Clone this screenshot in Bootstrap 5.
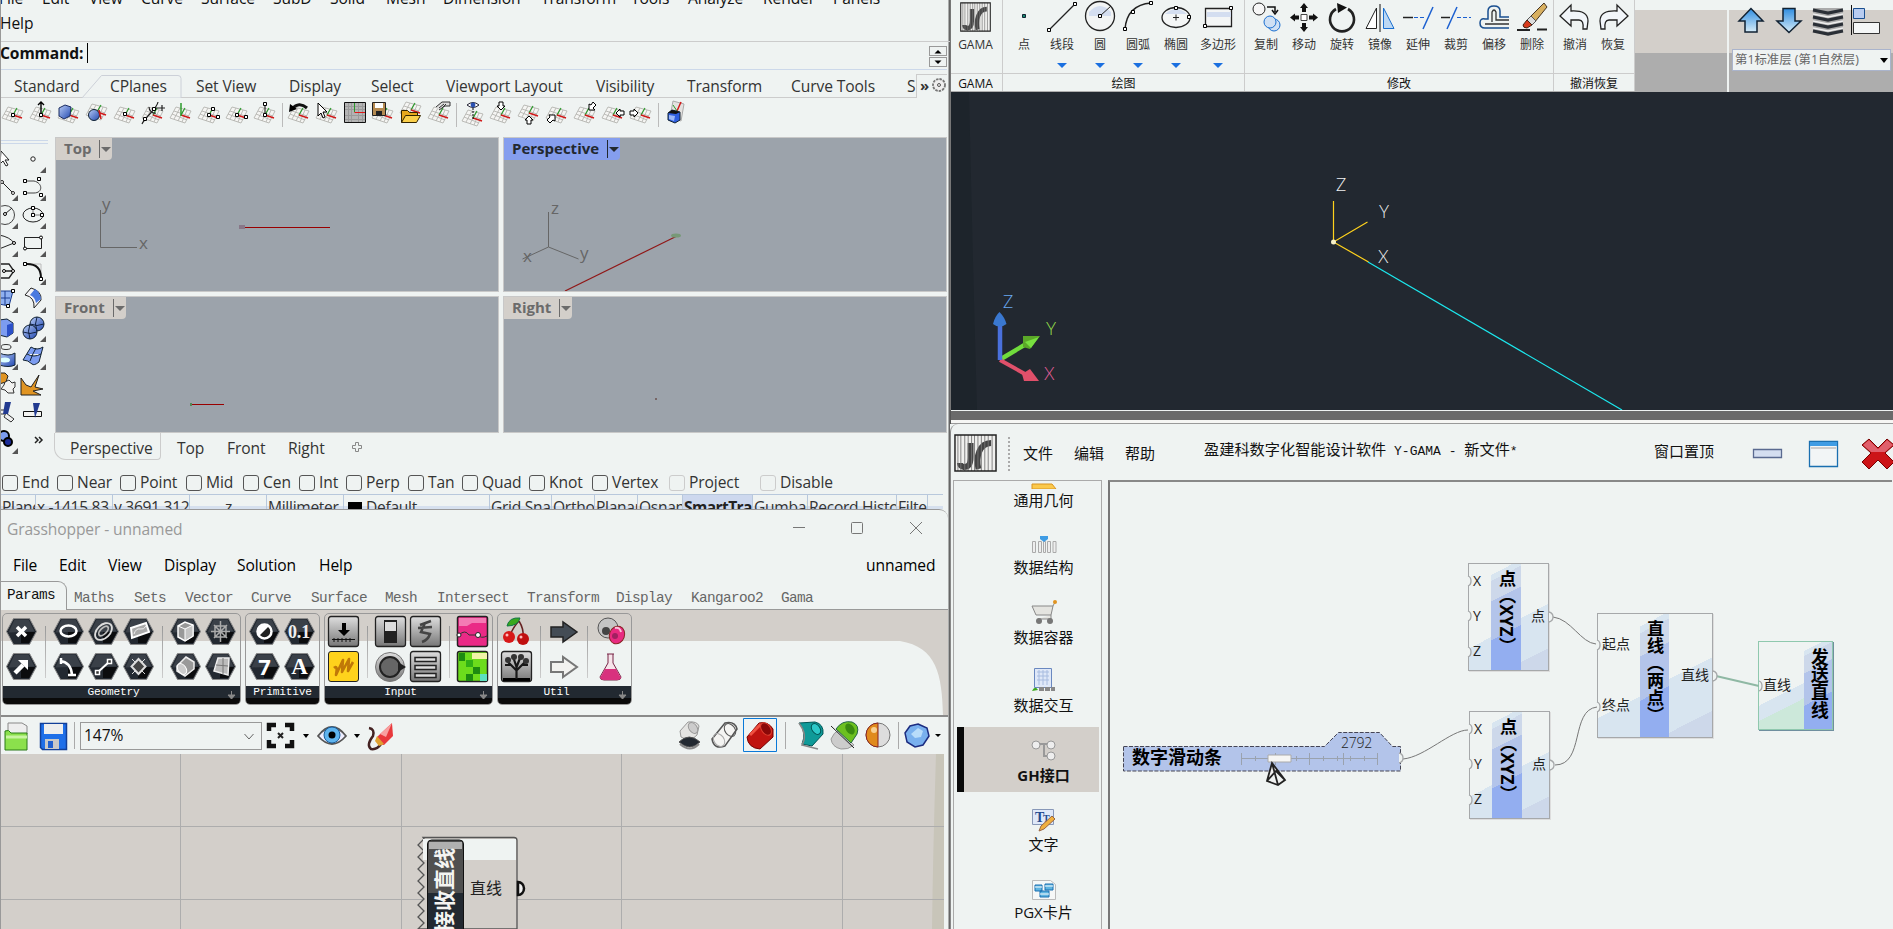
<!DOCTYPE html>
<html lang="zh-CN">
<head>
<meta charset="utf-8">
<title>Rhino / Grasshopper / Y-GAMA</title>
<link href="https://cdn.jsdelivr.net/npm/bootstrap@5.3.0/dist/css/bootstrap.min.css" rel="stylesheet">
<style>
:root{--pane:#eff3f2;--sand:#d3cfca;--ink:#222830;--line:#adadad}
html,body{height:929px;overflow:hidden}
body{background:var(--pane);font-family:"Open Sans","Noto Sans CJK SC",sans-serif;font-size:15.6px;color:#111;line-height:24px;letter-spacing:-.1px}
svg{display:block;flex:none}
.desk{width:1893px;height:929px}
.colL{width:950px;flex:none;background:linear-gradient(90deg,var(--pane) 947px,#666 948px);border-left:1px solid #999}
.trk{display:grid;white-space:nowrap}
.rhino{height:509px;flex:none}
.rmenu{height:42px;border-bottom:1px solid #ccc;display:flow-root}
.rmenu .m1{margin-top:-14px;height:25px;margin-left:-2px;grid-template-columns:43px 47px 52px 60px 72px 57px 56px 57px 98px 90px 57px 75px 70px 60px}
.rmenu .m2{margin-left:-1px}
.cmd{height:28px;border-bottom:1px solid #ccd8ea;width:946px;padding-right:0}
.cmd b{line-height:22px;margin-left:-1px;width:87px}
.caretbar{width:1px;height:20px;background:#000;margin-top:1px}
.spin{width:18px;height:10px;border:1px solid #999;margin-bottom:1px}
.rtabs{height:28px;color:#333;line-height:32px;width:946px;background:linear-gradient(#ccc,#ccc) 0 100%/100% 1px no-repeat;position:relative}
.rtabs .trk{grid-template-columns:96px 86px 93px 82px 75px 150px 91px 104px 116px 10px;margin-left:13px;position:relative}
.rtabs svg{position:absolute;left:81px;top:4px}
.rtabs .more{position:absolute;right:0;top:4px;width:31px;height:24px;background:var(--pane);border-left:1px solid #ccc;border-top:1px solid #ccc;line-height:20px;padding-left:3px;font-weight:700;font-size:15px}
.tbar{height:39px;margin-left:-2px;padding-top:1px}
.vsep{width:6px;height:24px;margin-top:4px;background:linear-gradient(#bbb,#bbb) 50% 0/1px 100% no-repeat}
.rmain{height:296px}
.tools{width:53px;flex:none;overflow-x:clip;overflow-y:visible;background:linear-gradient(#ccd8ea,#ccd8ea) 0 3px/47px 1px no-repeat,linear-gradient(#ccd8ea,#ccd8ea) 0 6px/47px 1px no-repeat}
.tools .tg{display:grid;grid-template-columns:28px 28px;grid-auto-rows:28.1px;padding-top:8px;margin-left:-10px}
.vps{display:grid;grid-template:155px 137px/444px 444px;gap:4px 4px;padding-left:1px}
.vp{background:#9ca3ab;border:1px solid #c8c8c8;position:relative;overflow:hidden}
.vp>svg{position:absolute;left:0;top:0}
.vlab{position:relative;z-index:1;display:inline-flex;background:var(--sand);color:#6b6b6b;font-weight:700;font-size:15px;line-height:20px;height:22px;padding-left:8px;border-radius:0 0 4px 0;vertical-align:top;letter-spacing:0}
.vlab i{width:13px;margin-left:8px;border-left:1px solid currentColor;margin-top:2px;height:18px;display:flex;align-items:center;padding-left:1px}
.vlab i:after{content:"";border:5px solid transparent;border-top-color:currentColor;border-bottom:0}
.vlab.on{background:#859eee;color:var(--ink)}
.vtabs{height:38px;color:#333;line-height:31px;padding-left:53px}
.vtabs .cur{width:107px;height:27px;border:1px solid #ccc;border-top:0;border-radius:0 0 4px 12px;padding-left:15px}
.vtabs .trk{grid-template-columns:50px 61px 63px 30px;margin-left:16px}
.snap{height:23px;line-height:22px;color:#333;grid-template-columns:55px 63px 66px 57px 56px 47px 62px 54px 67px 63px 77px 91px 70px;margin-left:1px}
.snap label:before{content:"";display:inline-block;width:16px;height:16px;border:1px solid #555;border-radius:3px;margin-right:4px;vertical-align:-3px}
.snap .dim:before{border-color:#ccc}
.stat{height:15px;border-top:1px solid #b8c8dc;overflow:hidden;line-height:25px;color:#333;width:942px;grid-template-columns:35px 77px 77px 77px 77px 146px 62px 43px 43px 45px 70px 55px 89px 31px;box-shadow:inset 0 -3px #d6e0ee}
.stat span{border-right:1px solid #b8c8dc;overflow:hidden;height:15px;padding-left:1px;letter-spacing:-.3px}
.stat .on{background:#cdd8ee;font-weight:700;color:#222;letter-spacing:-.6px}
.sw{display:inline-block;width:14px;height:14px;background:#000;vertical-align:-3px;margin:0 4px 0 3px}
/* grasshopper */
.gh{height:420px;flex:none;border-top:1px solid #999;border-radius:0 9px 0 0;width:947px;background:var(--pane);overflow:hidden}
.ght{height:42px;color:#999;line-height:38px;padding-left:6px}
.ghm{height:28px;line-height:27px;margin-left:12px;grid-template-columns:46px 49px 56px 73px 82px 547px 70px;color:#000}
.mono{font-family:"Liberation Mono","Noto Sans CJK SC",monospace}
.ghtab{height:30px;line-height:36px;font-size:14.4px;letter-spacing:-.64px;color:#666;grid-template-columns:67px 60px 51px 66px 60px 74px 52px 90px 89px 75px 90px 60px;padding-left:6px;background:linear-gradient(#999,#999) 66px 100%/900px 1px no-repeat}
.ghtab .cur{color:#111;border:1px solid #999;border-bottom:0;border-left:0;border-radius:0 9px 0 0;margin:1px 0 0 -6px;padding-left:6px;line-height:27px;width:66px}
.rib{height:107px;padding:3px 0 0 1px;background:linear-gradient(var(--sand) 31px,var(--pane) 31px);border-bottom:2px solid #8a8a8a;position:relative}
.rib .cornr{position:absolute;right:0;top:0}
.grp{height:92px;border:1px solid #999;border-radius:5px;overflow:hidden;position:relative;margin-right:4px;flex:none}
.grp .icx{height:72px;padding-left:1px}
.grp .c2{width:35px}
.grp .sp{width:12px;background:linear-gradient(#999,#ccc) 50% 12px/1px 52px no-repeat}
.grp .cap{background:linear-gradient(#222931 12px,#0a0a0a 12px);color:#fff;text-align:center;height:18px;font-size:11.2px;line-height:13px;letter-spacing:-.2px}
.g1{width:239px}.g2{width:75px}.g3{width:169px}.g4{width:135px}
.gbar{height:37px}
.zoomb{width:182px;height:28px;border:1px solid #999;margin:5px 0 0 4px;line-height:25px;padding:0 7px 0 3px;font-size:15.6px}
/* CAD */
.colR{width:943px}
.cad{height:410px;background:#1c232a;border-left:1px solid #777}
.ribb{height:92px;background:linear-gradient(var(--pane) 10px,var(--sand) 10px 53px,var(--line) 53px)}
.pnl{background:var(--pane);border-right:1px solid #ccc;height:91px;text-align:center;font-size:12px;color:#333;letter-spacing:0;flex:none}
.pnl .its{height:73px;padding-left:2px;line-height:20px}
.pnl .it{width:38px}
.pnl .it.wide{width:46px}
.pnl .it svg{margin:auto}
.pnl .dn:after{content:"";display:block;width:10px;margin:8px auto 0;border:5px solid transparent;border-top-color:#1a6fe0;border-bottom:0}
.pnl .cp{border-top:1px solid #ccc;line-height:19px;color:#111}
.p0{width:52px}.p0 .its,.p0 .cp{padding-right:2px!important}.p1{width:242px}.p2{width:309px}.p3{width:81px}
.fl{padding:0 0 0 92px}
.fls{border-left:2px solid var(--pane);width:166px;padding:5px 0 0 3px}
.flsel{width:159px;height:22px;border:1px solid #aab4cc;background:var(--pane);font-size:12.4px;line-height:20px;color:#666;padding:0 2px;margin-top:12px;letter-spacing:0;white-space:nowrap}
.cv{height:318px}
.strip{height:14px;background:linear-gradient(var(--pane) 1px,#6a6a6a 1px 10px,#f6f6f4 10px 13px,#999 13px);border-left:1px solid #555}
.gama{height:505px;border-left:1px solid #888;background:var(--pane);letter-spacing:0;border-radius:8px 0 0 0}
.gtop{height:56px;font-size:15px;color:#111;line-height:58px;white-space:nowrap}
.gtop .mn{grid-template-columns:51px 51px 79px;margin-left:9px}
.gtop .ti{font-size:15.2px;line-height:51px;width:450px}
.gtop .ti .mono{font-size:13px;white-space:pre;letter-spacing:0}
.gtop .pin{line-height:55px}
.glogo{margin:8px 0 0 3px}
.gbody{height:449px}
.side{width:149px;margin-left:2px;border:1px solid #aaa;border-bottom:0;flex:none;overflow:hidden;font-size:15px;position:relative}
.side .it{height:68.7px;text-align:center;padding-left:33px}
.side .it svg{margin:0 auto}
.side .it svg+div{line-height:24px;margin-top:0;margin-left:-1px}
.side .i1{height:52.5px}.side .i1 svg+div{margin-top:-1px}
.side .i3{margin-top:-2px;height:68px}.side .i4{height:58.5px}
.side .i6{padding-top:13px;height:80px}
.side .sel{background:linear-gradient(90deg,#0a0a0a 7px,var(--sand) 7px);margin:0 2px 0 3px;height:65px;margin-bottom:3.7px;padding-left:32px;font-weight:700}
.side .sel svg+div{margin-top:-1px}
.pane{width:784px;margin-left:6px;border-left:2px solid #777;border-top:2px solid #888;position:relative;overflow:hidden}
.wires{position:absolute;left:-2px;top:-2px;z-index:2}
.nd{position:absolute;border:1.5px solid #a6a8aa;display:grid;font-size:14px;line-height:18px;color:#222;box-shadow:1px 1px 0 #ddd;letter-spacing:0}
.nd .l{background:linear-gradient(153deg,transparent 72%,#d8e5f0 72%);display:flex;flex-direction:column;justify-content:space-around;padding:0 0 2px 4px}
.nd .h{background:linear-gradient(153deg,#eff3f2 9%,#d8e5f0 9% 14%,#cdd8ea 14% 31%,#b3c4ea 31% 63%,#93aef0 63%);writing-mode:vertical-rl;font-weight:700;font-size:17.2px;color:#000;line-height:30px;padding-top:6px;white-space:nowrap}
.nd .r{background:linear-gradient(153deg,transparent 45%,#d8e5f0 45% 82%,#cdd8ea 82%);display:flex;align-items:center;justify-content:end;padding:0 3px 2px 0}
.n1,.n2{width:81px;height:108px;grid-template-columns:22px 30px 1fr}
.n1{left:358px;top:81px}.n2{left:359px;top:229px}
.n3{left:487px;top:131px;width:116px;height:125px;grid-template-columns:42px 29px 1fr}
.n4{left:648px;top:159px;width:75px;height:89px;grid-template-columns:1fr 28px;border-color:#8fc8ae;box-shadow:1px 1px 0 #6f8f9f}
.n4 .l{background:linear-gradient(153deg,transparent 58%,#d8e5f0 58% 72%,#cce8da 72%)}
.n4 .h{font-size:17.8px;line-height:26px}
</style>
</head>
<body>
<svg width="0" height="0" class="position-absolute">
 <defs>
  <linearGradient id="bl" x1="0" y1="0" x2="1" y2="1"><stop offset="0" stop-color="#b8ccf6"/><stop offset="1" stop-color="#2148b0"/></linearGradient>
  <linearGradient id="bv" x1="0" y1="0" x2="0" y2="1"><stop offset="0" stop-color="#2f8de0"/><stop offset="1" stop-color="#d6ecf8"/></linearGradient>
  <linearGradient id="gy" x1="0" y1="0" x2="0" y2="1"><stop offset="0" stop-color="#dedede"/><stop offset="1" stop-color="#777"/></linearGradient>
  <symbol id="g" viewBox="0 0 28 28"><path d="M9 8l15 4-6 12-15-5zM13 9l-6 11M17 10l-6 12M20 11l-5 12M7 12l15 5M5 15l15 6" fill="#f5f5f3" stroke="#b4b4b0" stroke-width=".9"/><path d="M14 16l4-7" stroke="#2a9a2a" stroke-width="1.200"/><path d="M14 16l9 3" stroke="#d01818" stroke-width="1.400"/></symbol>
  <symbol id="sq" viewBox="0 0 4 4"><path d="M.5.5h3v3h-3z" fill="#fff" stroke="#000"/></symbol>
  <symbol id="hx" viewBox="0 0 35 35"><path d="M9.500 4.500h16l7 13-7 13h-16l-7-13z" fill="#232931" stroke="#8a8a8a"/><path d="M10.500 5.500h14l6 12-26 1z" fill="#3a4048"/><path d="M17 18h14l-6 11h-8z" fill="#0b0c0e"/></symbol>
  <symbol id="bt" viewBox="0 0 35 35"><rect x="2.500" y="2.500" width="30" height="30" rx="2.500" fill="url(#gy)" stroke="#222" stroke-width="1.300"/></symbol>
  <symbol id="tri" viewBox="0 0 28 28"><path d="M27 22v6h-6z" fill="#555"/></symbol>
  <symbol id="dn" viewBox="0 0 9 9"><path d="M4.500 0v7M1 4h7L4.500 8z" stroke="#888" fill="#888"/></symbol>
  <symbol id="logo" viewBox="0 0 44 38" preserveAspectRatio="none"><path d="M1 1h42v36H1z" fill="#f0f0ee"/><path d="M17 9v14c0 9-3 10-7 10-3-1-4-2-4-4M25 35c-3-12 1-26 13-26" fill="none" stroke="#444" stroke-width="6"/><path d="M4 1v36M7 1v36M11 1v36M14.500 1v36M18 1v36M21 1v36M24.500 1v36M28 1v36M31.500 1v36M35 1v36M39 1v36" stroke="#777" stroke-width=".9"/><path d="M1 1h42v36H1z" fill="none" stroke="#222" stroke-width="1.500"/></symbol>
 </defs>
</svg>
<div class="desk d-flex">
<div class="colL d-flex flex-column">
 <section class="rhino overflow-hidden">
  <div class="rmenu">
   <div class="m1 trk"><span>File</span><span>Edit</span><span>View</span><span>Curve</span><span>Surface</span><span>SubD</span><span>Solid</span><span>Mesh</span><span>Dimension</span><span>Transform</span><span>Tools</span><span>Analyze</span><span>Render</span><span>Panels</span></div>
   <div class="m2">Help</div>
  </div>
  <div class="cmd d-flex"><b>Command:</b><span class="caretbar"></span>
   <div class="ms-auto pt-1"><div class="spin"><svg width="16" height="8"><path d="M4.500 6.500L8 3l3.500 3.500z"/></svg></div><div class="spin"><svg width="16" height="8"><path d="M4.500 2.500L8 6l3.500-3.500z"/></svg></div></div></div>
  <div class="rtabs">
   <svg width="101" height="24"><path d="M0 24L19.500 1.500H96q3 0 3 3V24z" fill="#eff3f2" stroke="#ccd0d8"/></svg>
   <div class="trk"><span>Standard</span><span>CPlanes</span><span>Set View</span><span>Display</span><span>Select</span><span>Viewport Layout</span><span>Visibility</span><span>Transform</span><span>Curve Tools</span><span>S</span></div>
   <div class="more">»<svg width="16" height="16" style="left:14px;top:2px"><circle cx="8" cy="8" r="6" fill="#eee" stroke="#777" stroke-width="1.800" stroke-dasharray="2.500 1"/><circle cx="8" cy="8" r="1.500" fill="none" stroke="#555"/></svg></div>
  </div>
  <div class="tbar d-flex">
   <svg width="28" height="28"><use href="#g"/><use href="#sq" x="12" y="14" width="4" height="4"/></svg>
   <svg width="28" height="28"><use href="#g"/><path d="M14 15V4M11 6l3-3 3 3" stroke="#000" stroke-width="1.400" fill="none"/><use href="#sq" x="12" y="14" width="4" height="4"/></svg>
   <svg width="28" height="28"><use href="#g"/><path d="M4 9l6-3 6 2-1 9-6 3-5-3z" fill="url(#bl)" stroke="#1a2c60"/></svg>
   <svg width="28" height="28"><use href="#g" y="-3"/><circle cx="11" cy="16" r="5.500" fill="url(#bl)" stroke="#123"/><path d="M16 11l2 9" stroke="#d01818" stroke-width="1.500"/></svg>
   <svg width="28" height="28"><use href="#g"/><use href="#sq" x="12" y="13" width="4" height="4"/></svg>
   <svg width="28" height="28"><use href="#g"/><path d="M3 25C6 18 18 10 19 3M10 8a6 6 0 0 0 7 6M17 9h9M23 6v6" stroke="#222" fill="none" stroke-width="1.200"/><use href="#sq" x="4" y="18" width="4" height="4"/><use href="#sq" x="13" y="8" width="4" height="4"/></svg>
   <svg width="28" height="28"><use href="#g"/><path d="M14 17V4" stroke="#2a9a2a" stroke-width="1.500"/></svg>
   <svg width="28" height="28"><use href="#g"/><use href="#sq" x="16" y="8" width="4" height="4"/><use href="#sq" x="12" y="14" width="4" height="4"/><use href="#sq" x="21" y="16" width="4" height="4"/></svg>
   <svg width="28" height="28"><use href="#g"/><use href="#sq" x="12" y="14" width="4" height="4"/><use href="#sq" x="21" y="16" width="4" height="4"/></svg>
   <svg width="28" height="28"><use href="#g"/><path d="M14 15V5" stroke="#000"/><use href="#sq" x="12" y="3" width="4" height="4"/><use href="#sq" x="12" y="14" width="4" height="4"/></svg>
   <div class="vsep"></div>
   <svg width="28" height="28"><use href="#g"/><path d="M7 10q7-8 15-1" stroke="#111" stroke-width="3" fill="none"/><path d="M4 13l1-8 7 5z"/></svg>
   <svg width="28" height="28"><use href="#g"/><path d="M5 4v13l3-3 2 5 2-1-2-5h4z" fill="#fff" stroke="#000"/></svg>
   <svg width="28" height="28"><path d="M3.500 3.500h21v20h-21z" fill="#b4b4b4" stroke="#111"/><path d="M7.500 4v19M10.500 4v19M17.500 4v19M21.500 4v19M4 7.500h20M4 10.500h20M4 16.500h20M4 20.500h20" stroke="#9a9a9a"/><path d="M13.500 4v9" stroke="#2a9a2a"/><path d="M13.500 13.500H24" stroke="#e01818"/></svg>
   <svg width="28" height="28"><use href="#g"/><path d="M3.500 3.500h13v13h-13z" fill="#b58a50" stroke="#222"/><path d="M6 4h8v5H6z" fill="#fff"/><path d="M7 12h6v4H7z" fill="#222"/></svg>
   <svg width="28" height="28"><use href="#g" y="-5"/><path d="M4.500 23.500v-12h6l2 2h8v3" fill="#e8a81c" stroke="#332400"/><path d="M4.500 23.500l4-7h15l-4 7z" fill="#fbcf4a" stroke="#332400"/></svg>
   <svg width="28" height="28"><use href="#g"/><path d="M11 8l6-5h8v4h-5l-6 4" fill="#ddd" stroke="#333"/><path d="M14 9l5-4M17 9l4-4" stroke="#333"/></svg>
   <div class="vsep"></div>
   <svg width="28" height="28"><use href="#g" y="3"/><path d="M8 6q6-5 12 0-6 5-12 0z" fill="#fff" stroke="#223"/><circle cx="14" cy="6" r="2.400" fill="#2a50b0"/><path d="M14 9v11" stroke="#000" stroke-dasharray="2 1"/></svg>
   <svg width="28" height="28"><use href="#g"/><path d="M12 3h4v4h2l-4 4-4-4h2z" fill="#fff" stroke="#000"/></svg>
   <svg width="28" height="28"><use href="#g" y="-2"/><path d="M12 25h4v-4h2l-4-4-4 4h2z" fill="#fff" stroke="#000"/></svg>
   <svg width="28" height="28"><use href="#g"/><path d="M4 21l3 3 3-3 2 1v-6H6l1 2z" fill="#fff" stroke="#000"/></svg>
   <svg width="28" height="28"><use href="#g"/><path d="M18 5v6h6l-2-2 3-3-3-3-2 3z" fill="#fff" stroke="#000"/></svg>
   <svg width="28" height="28"><use href="#g"/><path d="M25 12h-4v-2l-4 4 4 4v-2h4z" fill="#fff" stroke="#000"/></svg>
   <svg width="28" height="28"><use href="#g"/><path d="M3 12h4v-2l4 4-4 4v-2H3z" fill="#fff" stroke="#000"/></svg>
   <div class="vsep"></div>
   <svg width="28" height="28"><path d="M12 2l11 3-3 17-11-4z" fill="#e4e2e0" stroke="#aaa"/><path d="M16 12l4-9" stroke="#d01818" stroke-width="1.500"/><path d="M16 12l-4-6" stroke="#2a9a2a"/><path d="M7 14l4-3 8 2v8l-5 3-7-3z" fill="#2f5fe0" stroke="#123"/><path d="M7 14l4-3 8 2-4 2z" fill="#111"/><path d="M8 16l6 1-1 5-5-2z" fill="#9cb8f8"/></svg>
  </div>
  <div class="rmain d-flex">
   <div class="tools"><div class="tg">
    <svg width="28" height="28"><path d="M10 6l8 9h-4l3 5-2 1-3-5-3 3z" fill="#fff" stroke="#222"/></svg>
    <svg width="28" height="28"><circle cx="14" cy="14" r="2.200" fill="#fff" stroke="#222"/><use href="#tri"/></svg>
    <svg width="28" height="28"><path d="M11 9l11 11" stroke="#222"/><circle cx="11" cy="9" r="1.500" fill="#fff" stroke="#222"/><circle cx="22" cy="20" r="1.500" fill="#fff" stroke="#222"/><use href="#tri"/></svg>
    <svg width="28" height="28"><path d="M7 8h8c9 2 9 12 0 12H7" fill="none" stroke="#444"/><use href="#sq" x="4" y="6" width="4" height="4"/><use href="#sq" x="18" y="4" width="4" height="4"/><use href="#sq" x="4" y="18" width="4" height="4"/><use href="#sq" x="20" y="20" width="4" height="4"/><use href="#tri"/></svg>
    <svg width="28" height="28"><circle cx="14" cy="14" r="9.500" fill="none" stroke="#444"/><path d="M14 13l7-6" stroke="#222"/><circle cx="14" cy="13" r="1.500" fill="#fff" stroke="#000"/><use href="#tri"/></svg>
    <svg width="28" height="28"><ellipse cx="14" cy="14" rx="10" ry="7" fill="none" stroke="#222"/><path d="M14 7v7h9" stroke="#777" fill="none"/><use href="#sq" x="12" y="5" width="4" height="4"/><use href="#sq" x="12" y="12" width="4" height="4"/><use href="#sq" x="21" y="12" width="4" height="4"/><use href="#tri"/></svg>
    <svg width="28" height="28"><path d="M8 6q11 2 15 8L8 20" fill="none" stroke="#222"/><circle cx="23" cy="14" r="1.500" fill="#fff" stroke="#000"/><use href="#tri"/></svg>
    <svg width="28" height="28"><path d="M5.500 8.500h17v11h-17z" fill="none" stroke="#222"/><circle cx="22" cy="8.500" r="1.500" fill="#fff" stroke="#000"/><circle cx="6" cy="19.500" r="1.500" fill="#fff" stroke="#000"/><use href="#tri"/></svg>
    <svg width="28" height="28"><path d="M8 7h10l5 7-5 7H8M13 14h9" fill="none" stroke="#222" stroke-width="1.300"/><circle cx="13" cy="14" r="1.500" fill="#fff" stroke="#000"/><circle cx="22" cy="14" r="1.500" fill="#fff" stroke="#000"/><use href="#tri"/></svg>
    <svg width="28" height="28"><path d="M8 7h14v13" fill="none" stroke="#bbb"/><path d="M8 7q14 0 14 14" fill="none" stroke="#111" stroke-width="2"/><use href="#sq" x="4" y="5" width="4" height="4"/><use href="#sq" x="20" y="20" width="4" height="4"/><use href="#tri"/></svg>
    <svg width="28" height="28"><path d="M8 6h14l-4 15-10-2zM14 6v14M8 13h11" fill="#8fb0f0" stroke="#1a3c90"/><use href="#sq" x="20" y="4" width="4" height="4"/><use href="#sq" x="15" y="19" width="4" height="4"/><use href="#tri"/></svg>
    <svg width="28" height="28"><path d="M6 10l6-7q11 3 10 12l-7 8q1-11-9-13z" fill="#f4f4f6" stroke="#222"/><path d="M11 10l5-6q5 3 6 10l-5 4q-1-6-6-8z" fill="#4a7ae0"/><use href="#tri"/></svg>
    <svg width="28" height="28"><path d="M8 6l8-1 6 4v10l-6 4-8-2z" fill="#7c9cf0" stroke="#123"/><path d="M16 11l6-2v10l-6 4z" fill="#2b50c8"/><use href="#tri"/></svg>
    <svg width="28" height="28"><circle cx="18" cy="10" r="7" fill="url(#bl)" stroke="#123"/><circle cx="11" cy="18" r="7" fill="url(#bl)" stroke="#123"/><path d="M18 3q-3 7 0 14M11 10q-3 7 0 15M4 18q7 3 14 0M11 10q7 3 14 0" stroke="#124" fill="none"/><use href="#tri"/></svg>
    <svg width="28" height="28"><ellipse cx="15" cy="5" rx="5" ry="2.500" fill="none" stroke="#333"/><path d="M8 11q10 4 16 0v12q-6 3-16 0z" fill="url(#bl)" stroke="#123"/><ellipse cx="14" cy="18" rx="5" ry="2.500" fill="#dff"/><use href="#tri"/></svg>
    <svg width="28" height="28"><path d="M4 18l8-13q6 4 12 0l-4 15q-5 4-7 2-4-4-9-4zM8 12q7 4 14 0M11 19q3-8 6-13" fill="#7c9cf0" stroke="#123"/><use href="#tri"/></svg>
    <svg width="28" height="28"><path d="M8 3h6l3 3-2 6-7 2z" fill="#e09422" stroke="#222"/><path d="M14 12l4-2 3 3 3-1v5l-2 2 1 4h-6l-3-3-4-1 3-4z" fill="#f2f2f0" stroke="#333"/></svg>
    <svg width="28" height="28"><path d="M2 25V8l5 7 5 2L20 5l-4 12 8 2-10 2 8 4z" fill="#e09422" stroke="#222"/></svg>
    <svg width="28" height="28"><path d="M8 12h6v4H8zM15 15l8 6-3 3-7-5z" fill="#eee" stroke="#333"/><path d="M14 4h6l-3 12h-5z" fill="#223a90"/></svg>
    <svg width="28" height="28"><path d="M4.500 13.500h18v5h-18z" fill="#f4f4f2" stroke="#111"/><path d="M14 5h7l-5 15z" fill="#223a90"/></svg>
    <svg width="28" height="28"><circle cx="13" cy="10" r="5" fill="#7c9cf0" stroke="#000" stroke-width="2"/><circle cx="17" cy="16" r="4" fill="#1c2c98" stroke="#000" stroke-width="2"/><use href="#tri"/></svg>
    <svg width="28" height="28"><path d="M16 11l3 3-3 3M20 11l3 3-3 3" fill="none" stroke="#222" stroke-width="1.500"/></svg>
   </div></div>
   <div class="vps">
    <div class="vp"><span class="vlab">Top<i></i></span><svg width="442" height="153" fill="none"><path d="M44.500 72v37.500H81" stroke="#666"/><path d="M185 89.500h89" stroke="#900"/><path d="M183 87h6v4h-6z" fill="#878"/><text x="46" y="72" font-size="17" fill="#666">y</text><text x="83" y="111" font-size="17" fill="#666">x</text></svg></div>
    <div class="vp"><span class="vlab on">Perspective<i></i></span><svg width="442" height="153" fill="none"><path d="M44.500 74v35l-26 12M44.500 109l30 12" stroke="#666"/><path d="M61 153L173 98" stroke="#901818" stroke-width="1.200"/><ellipse cx="172" cy="97.500" rx="5" ry="2" fill="#797"/><text x="47" y="76" font-size="17" fill="#666">z</text><text x="19" y="124" font-size="17" fill="#666">x</text><text x="76" y="121" font-size="17" fill="#666">y</text></svg></div>
    <div class="vp"><span class="vlab">Front<i></i></span><svg width="442" height="135"><path d="M135 107.500h33" stroke="#900"/><path d="M134 106h2v3h-2z" fill="#585"/></svg></div>
    <div class="vp"><span class="vlab">Right<i></i></span><svg width="442" height="135"><path d="M151 101h2v2h-2z" fill="#766"/></svg></div>
   </div>
  </div>
  <div class="vtabs d-flex"><div class="cur">Perspective</div><div class="trk"><span>Top</span><span>Front</span><span>Right</span><svg width="12" height="12" class="mt-2 ms-0"><path d="M4.500 1.500h3v3h3v3h-3v3h-3v-3h-3v-3h3z" fill="none" stroke="#888"/></svg></div></div>
  <div class="snap trk"><label>End</label><label>Near</label><label>Point</label><label>Mid</label><label>Cen</label><label>Int</label><label>Perp</label><label>Tan</label><label>Quad</label><label>Knot</label><label>Vertex</label><label class="dim">Project</label><label class="dim">Disable</label></div>
  <div class="stat trk"><span>Plane</span><span>x -1415.83</span><span>y 3691.312</span><span class="text-center">z</span><span>Millimeter</span><span><i class="sw"></i>Default</span><span>Grid Snap</span><span>Ortho</span><span>Planar</span><span>Osnap</span><span class="on">SmartTrack</span><span>Gumball</span><span>Record History</span><span>Filter</span></div>
 </section>
 <section class="gh">
  <div class="ght d-flex"><span>Grasshopper - unnamed</span><svg class="ms-auto" width="157" height="40" fill="none" stroke="#777"><path d="M2 17.500h12"/><rect x="60.500" y="12.500" width="11" height="11" rx="1"/><path d="M119 12l12 12M131 12l-12 12"/></svg></div>
  <div class="ghm trk"><span>File</span><span>Edit</span><span>View</span><span>Display</span><span>Solution</span><span>Help</span><span>unnamed</span></div>
  <div class="ghtab trk mono"><span class="cur">Params</span><span>Maths</span><span>Sets</span><span>Vector</span><span>Curve</span><span>Surface</span><span>Mesh</span><span>Intersect</span><span>Transform</span><span>Display</span><span>Kangaroo2</span><span>Gama</span></div>
  <div class="rib d-flex">
   <svg class="cornr" width="48" height="105"><path d="M0 0h48v105h-5c-1-40-6-68-43-74z" fill="#d3cfca"/></svg>
   <div class="grp g1"><div class="icx d-flex">
     <div class="c2"><svg width="35" height="35"><use href="#hx"/><path d="M13 13l9 9M22 13l-9 9" stroke="#fff" stroke-width="3.500"/></svg><svg width="35" height="35"><use href="#hx"/><path d="M11 24l8-8" stroke="#fff" stroke-width="4.500"/><path d="M14 11h10v10z" fill="#fff"/></svg></div><div class="sp"></div>
     <div class="c2"><svg width="35" height="35"><use href="#hx"/><ellipse cx="17.500" cy="17" rx="8" ry="5.500" fill="none" stroke="#fff" stroke-width="2.500"/></svg><svg width="35" height="35"><use href="#hx"/><path d="M9 12q11 1 12 14M17 26h8M10 9v6" fill="none" stroke="#fff" stroke-width="2.500"/></svg></div>
     <div class="c2"><svg width="35" height="35"><use href="#hx"/><ellipse cx="17.500" cy="17.500" rx="10" ry="6.500" transform="rotate(-45 17.500 17.500)" fill="none" stroke="#ddd" stroke-width="1.800"/><ellipse cx="17.500" cy="17" rx="6" ry="3" transform="rotate(-45 17.500 17)" fill="none" stroke="#bbb" stroke-width="1.800"/></svg><svg width="35" height="35"><use href="#hx"/><path d="M12 23L23 13" stroke="#fff" stroke-width="2"/><path d="M9.500 21.500h4v4h-4zM21.500 10.500h4v4h-4z" fill="#333" stroke="#fff" stroke-width="1.500"/></svg></div>
     <div class="c2"><svg width="35" height="35"><use href="#hx"/><path d="M10 14l15-5 3 9-17 6z" fill="#aaa" stroke="#fff" stroke-width="2"/><path d="M13 20q2-6 6-5t6-3" stroke="#eee" fill="none"/></svg><svg width="35" height="35"><use href="#hx"/><path d="M17.500 10l7 7.500-7 7.500-7-7.500z" fill="#444" stroke="#ddd" stroke-width="2"/><path d="M11 10l4 4M24 10l-4 4M11 25l4-4M24 25l-4-4" stroke="#ddd"/></svg></div><div class="sp"></div>
     <div class="c2"><svg width="35" height="35"><use href="#hx"/><path d="M10 12l7-4 8 3v11l-8 5-7-4z" fill="#999" stroke="#fff" stroke-width="1.500"/><path d="M10 12l7 3v12l8-5V11l-8 4" stroke="#fff" fill="#c4c4c4"/></svg><svg width="35" height="35"><use href="#hx"/><path d="M9 17l9-9 8 5v7l-9 7-8-5z" fill="#999" stroke="#eee" stroke-width="1.500"/><ellipse cx="14" cy="20" rx="4" ry="6" transform="rotate(-35 14 20)" fill="#ccc" stroke="#fff"/></svg></div>
     <div class="c2"><svg width="35" height="35"><use href="#hx"/><path d="M17.500 7v21M8 17.500h19M11 11l13 13M24 11L11 24M12 12h11v11H12z" stroke="#aaa" stroke-width="1.500" fill="none"/></svg><svg width="35" height="35"><use href="#hx"/><path d="M15 9h11l-1 17-14-4z" fill="#bbb" stroke="#eee" stroke-width="1.500"/><path d="M20 9v16M13 16l12 1" stroke="#777"/></svg></div>
    </div><div class="cap mono pe-3">Geometry</div><svg class="position-absolute bottom-0 end-0 mb-1 me-1" width="9" height="9"><use href="#dn"/></svg></div>
   <div class="grp g2"><div class="icx d-flex">
     <div class="c2"><svg width="35" height="35"><use href="#hx"/><circle cx="17.500" cy="17.500" r="7" fill="#222" stroke="#fff" stroke-width="2.500"/><path d="M12 22A7 7 0 0 1 22 12z" fill="#fff"/></svg><svg width="35" height="35"><use href="#hx"/><text x="17.500" y="26" text-anchor="middle" font-size="22" font-weight="700" fill="#fff">7</text></svg></div>
     <div class="c2"><svg width="35" height="35"><use href="#hx"/><text x="17" y="24" text-anchor="middle" font-size="18" font-weight="700" font-family="Liberation Serif" fill="#eee">0.1</text></svg><svg width="35" height="35"><use href="#hx"/><text x="17.500" y="25" text-anchor="middle" font-size="23" font-weight="700" font-family="Liberation Serif" fill="#fff">A</text></svg></div>
    </div><div class="cap mono">Primitive</div></div>
   <div class="grp g3"><div class="icx d-flex">
     <div class="c2"><svg width="35" height="35"><use href="#bt"/><path d="M16 9h4v7h4l-6 6-6-6h4z"/><path d="M6 25.500h23M8 24v4M12 24v4M16 24v4M20 24v4M24 24v4" stroke="#111"/></svg><svg width="35" height="35"><rect x="2.500" y="2.500" width="30" height="30" rx="2.500" fill="#ffd21c" stroke="#222"/><path d="M8 19q4-4 2 7l7-15-1 12 7-13-1 12 5-9" fill="none" stroke="#c07808" stroke-width="2.600" stroke-linejoin="round"/></svg></div><div class="sp"></div>
     <div class="c2"><svg width="35" height="35"><use href="#bt"/><path d="M11 6h13v23H11z" fill="#222"/><path d="M12 8h11v9H12z" fill="#ddd"/></svg><svg width="35" height="35"><circle cx="17" cy="18" r="14.500" fill="url(#gy)" stroke="#777"/><circle cx="17" cy="18" r="10" fill="#666" stroke="#222" stroke-width="2"/><path d="M25 13l8 5-8 5z" fill="#222"/></svg></div>
     <div class="c2"><svg width="35" height="35"><use href="#bt"/><path d="M12 11l11-4M10 14l14-1M17 9l-4 9 9 2q-2 6-8 8" stroke="#444" stroke-width="2.500" fill="none"/></svg><svg width="35" height="35"><use href="#bt"/><path d="M7 8.500h21v4H7zM7 16.500h21v4H7zM7 24.500h21v4H7z" fill="#ddd" stroke="#222" stroke-width="1.500"/></svg></div><div class="sp"></div>
     <div class="c2"><svg width="35" height="35"><rect x="2.500" y="2.500" width="30" height="30" rx="2" fill="#ea2a86" stroke="#222" stroke-width="1.500"/><path d="M4 4h27v5H17l-5 3H4z" fill="#f47ab4"/><path d="M4 21q6-6 10 0h9q3 4 9 1" stroke="#333" fill="none"/><circle cx="4" cy="21" r="2" fill="#fff" stroke="#222"/><circle cx="23" cy="21" r="2.500" fill="#fff" stroke="#222"/></svg><svg width="35" height="35"><rect x="2.500" y="2.500" width="30" height="30" rx="2" fill="#6cdc1c" stroke="#222" stroke-width="1.500"/><path d="M4 4h6v8H4zM18 18h7v7h-7zM11 25h7v7h-7z" fill="#1d8a10"/><path d="M17 4h15v6H17z" fill="#f0f4a8"/><path d="M11 11h7v7h-7z" fill="#2faf16"/><path d="M25 25h7v7h-7z" fill="#5ce0c0"/></svg></div>
    </div><div class="cap mono pe-3">Input</div><svg class="position-absolute bottom-0 end-0 mb-1 me-1" width="9" height="9"><use href="#dn"/></svg></div>
   <div class="grp g4"><div class="icx d-flex">
     <div class="c2"><svg width="35" height="35"><path d="M20 7q-5 5-9 14M20 7q5 8 4 16" stroke="#622" stroke-width="1.500" fill="none"/><path d="M8 12q2-9 13-8-2 8-13 8z" fill="#3aa81c" stroke="#174"/><circle cx="10" cy="23" r="6" fill="#d81818"/><circle cx="24" cy="25" r="6" fill="#c01010"/><circle cx="8" cy="21" r="1.500" fill="#fbb"/><circle cx="22" cy="23" r="1.500" fill="#fbb"/></svg><svg width="35" height="35"><use href="#bt"/><path d="M4 29h27v3H4z"/><path d="M17.500 30V18M17 21l-8-8M18 21l8-8M17.500 18l-3-9M17.500 18l4-10M12 16H6M23 16h6" stroke="#181818" stroke-width="2.200"/><g fill="#333"><circle cx="9" cy="11" r="3"/><circle cx="15" cy="8" r="3"/><circle cx="22" cy="8" r="3"/><circle cx="27" cy="12" r="3"/></g></svg></div><div class="sp"></div>
     <div class="c2"><svg width="35" height="35"><path d="M5 13h12V8l14 10-14 10v-5H5z" fill="#444c55" stroke="#222" stroke-width="1.500"/></svg><svg width="35" height="35"><path d="M5 13h12V8l14 10-14 10v-5H5z" fill="#f2f2ef" stroke="#777" stroke-width="2"/></svg></div><div class="sp"></div>
     <div class="c2"><svg width="35" height="35"><ellipse cx="15" cy="14" rx="10" ry="10" fill="#c4c4c4" stroke="#555"/><circle cx="13" cy="17" r="4" fill="#444"/><ellipse cx="24" cy="21" rx="7.500" ry="9" fill="#e82a80" stroke="#822" transform="rotate(20 24 21)"/><circle cx="22" cy="22" r="3" fill="#a02060"/><path d="M22 14q5-1 6 4" stroke="#f8c0d8" stroke-width="2" fill="none"/></svg><svg width="35" height="35"><path d="M14 5h7M15 5v9L7 28q0 3 4 3h13q4 0 4-3l-8-14V5" fill="#f6e4ea" stroke="#724"/><path d="M12 20h11l5 9q-1 2-4 2H11q-3 0-4-2z" fill="#d8327e"/></svg></div>
    </div><div class="cap mono pe-3">Util</div><svg class="position-absolute bottom-0 end-0 mb-1 me-1" width="9" height="9"><use href="#dn"/></svg></div>
  </div>
  <div class="gbar d-flex">
   <svg width="75" height="37"><path d="M7 13V6h14l5 3v8" fill="#eee" stroke="#888"/><path d="M4 14q4-2 6 2h16v17H4z" fill="#8be04c" stroke="#2b7a18"/><path d="M5 20h21" stroke="#c8f4a0" stroke-width="3"/><path d="M39.500 6.500h26v26h-24l-2-2z" fill="#1f6fe8" stroke="#123f98" stroke-width="1.500"/><path d="M43 7h19v10H43z" fill="#eee"/><path d="M44 22h14v10H44z" fill="#c8c8c8"/><path d="M47 24h5v7h-5z" fill="#1f5fd0"/><path d="M73.500 5v27" stroke="#aaa"/></svg>
   <div class="zoomb d-flex justify-content-between"><span>147%</span><svg width="10" height="26"><path d="M.5 11L5 16l4.500-5" fill="none" stroke="#666"/></svg></div>
   <svg width="140" height="37"><g fill="none" stroke="#111" stroke-width="4.500"><path d="M7 14V8h7M23 8h7v6M7 23v6h7M23 29h7v-6"/></g><path d="M16 16l5 5M21 16l-5 5" stroke="#222" stroke-width="2"/><path d="M41 17h6l-3 4zM92 17h6l-3 4z"/><path d="M56 19q14-18 28 0-14 16-28 0z" fill="#eef" stroke="#555" stroke-width="1.800"/><circle cx="70" cy="18" r="8" fill="#5fb4ee" stroke="#1a5c98"/><circle cx="70" cy="18" r="3.500"/><path d="M107 11q6 1 4 8-7 9-2 13 6 1 10-5" fill="none" stroke="#422" stroke-width="2.500"/><path d="M115 20L130 6l1 13-9 9q-7 0-7-8z" fill="#e8383c"/><path d="M118 17l12-11-6 14z" fill="#f8a0a0"/><path d="M115 19l7 8-5 2-4-5z" fill="#e0a030"/></svg>
   <svg class="ms-auto me-1" width="273" height="37" viewBox="0 0 273 37"><g stroke="#555"><path d="M9 14l8-9q9-1 11 4l-2 9-7 6-9-4z" fill="#e4e4e2" stroke="#999"/><ellipse cx="22" cy="11" rx="4" ry="6" transform="rotate(-35 22 11)" fill="#ccc" stroke="#999"/><path d="M8 25q10-10 21 0-10 10-21 0z" fill="#222931"/><path d="M9 27q10 9 19 0" fill="none" stroke="#888" stroke-width="2"/><path d="M41 22L54 6q10-2 12 6l-12 17q-11 4-13-7z" fill="#f4f4f2" stroke-width="1.500"/><ellipse cx="59" cy="13" rx="5" ry="7" transform="rotate(-35 59 13)" fill="none"/><ellipse cx="48" cy="23" rx="5" ry="7" transform="rotate(-35 48 23)" fill="none" stroke="#aaa"/></g>
    <path d="M72.500 1.500h33v33h-33z" fill="none" stroke="#0a78d8"/><path d="M76 20L88 6q9-2 14 6v8L89 32q-12-1-13-12z" fill="#c01410" stroke="#700"/><path d="M79 18L90 7" stroke="#f05040" stroke-width="3"/><ellipse cx="95" cy="12" rx="4.500" ry="7" transform="rotate(-35 95 12)" fill="#8a0808" stroke="#e04030"/><path d="M114.500 5v27M227.500 5v27" stroke="#aaa"/>
    <path d="M128 6l16-1q9 2 8 12l-11 12-10-2q5-12-3-21z" fill="#0f9a98" stroke="#055"/><path d="M128 6q9 12 3 22l16 4" fill="none" stroke="#888" stroke-width="1.500"/><ellipse cx="145" cy="12" rx="4" ry="6" transform="rotate(-35 145 12)" fill="#2cc8c8" stroke="#055"/><path d="M160 22q3-7 8-9l15 15q-6 5-13 4-9-2-10-10z" fill="#ccc" stroke="#999"/><path d="M165 12q6-9 16-7 8 3 5 12l-6 9z" fill="#6cc020" stroke="#264"/><path d="M160 9l23 22" stroke="#222"/><ellipse cx="179" cy="12" rx="4" ry="6" transform="rotate(-35 179 12)" fill="#3a8a10"/>
    <circle cx="207" cy="18" r="12" fill="#ddd" stroke="#777"/><path d="M207 6a12 12 0 0 0 0 24z" fill="#e08a1c" stroke="#822"/><circle cx="203" cy="13" r="3" fill="#f8d090"/><path d="M247 7l9 4 2 8-6 9-8 2-8-5-2-9 5-7z" fill="#79b0ee" stroke="#1c2c80" stroke-width="1.500"/><path d="M247 11l5 3-2 6-6 1-4-4z" fill="#b8dcfa"/><path d="M264 17h6l-3 3z"/></svg>
  </div>
  <svg width="947" height="175"><rect width="947" height="175" fill="#d3cfca"/><path d="M935 0h8v175h-12q1-80 4-175z" fill="#c8c5b9"/><path d="M179.500 0v175M400.500 0v175M620.500 0v175M841.500 0v175M0 72.500h943M0 145.500h943" stroke="#adadad"/><path d="M943 0h4v175h-4z" fill="#eff3f2"/>
   <path d="M422 83.500h91q3 0 3 3V175h-99l6-6-6-6 6-6-6-6 6-6-6-6 6-6-6-6 6-6-6-6 6-6-6-6 6-6-6-6 6-6z" fill="#d3cfca" stroke="#555" stroke-width="1.300"/><path d="M422 85h93v21h-93z" fill="#eff3f2"/><path d="M426.500 90q0-4 4-4h28q4 0 4 4v90h-36z" fill="#505050" stroke="#111"/><path d="M428 88h33v7h-33z" fill="#b0b0b0"/><path d="M427 139h35v36h-35z" fill="#222931"/>
   <text transform="translate(451 178) rotate(-90)" font-size="21" font-weight="700" fill="#f4f4f2" letter-spacing="0">接收直线</text><text x="469" y="140" font-size="16" fill="#222" letter-spacing="0">直线</text><path d="M517 128a6 6.500 0 0 1 0 13z" fill="#f0f0f0" stroke="#111" stroke-width="2.500"/></svg>
 </section>
</div>

<div class="colR">
 <section class="cad">
  <div class="ribb d-flex">
   <div class="pnl p0"><div class="its p-0"><svg class="mx-auto" width="32" height="35"><use href="#logo" x="0" y="2" width="31" height="30"/></svg>GAMA</div><div class="cp">GAMA</div></div>
   <div class="pnl p1"><div class="its d-flex">
    <div class="it"><svg width="38" height="35"><path d="M17.500 14.500h3v3h-3z" fill="#188a70" stroke="#123"/></svg>点</div>
    <div class="it dn"><svg width="38" height="35"><path d="M6 30L32 4" stroke="#222" stroke-width="1.300"/><use href="#sq" x="4" y="28" width="4" height="4"/><use href="#sq" x="30" y="2" width="4" height="4"/></svg>线段</div>
    <div class="it dn"><svg width="38" height="35"><circle cx="19" cy="16" r="14.500" fill="#f2f4f4" stroke="#222" stroke-width="1.300"/><path d="M8 12q11-12 22 0v4H8z" fill="#d4def0"/><path d="M19 16L30 6" stroke="#222"/><use href="#sq" x="17" y="14" width="4" height="4"/></svg>圆</div>
    <div class="it dn"><svg width="38" height="35"><path d="M6 29Q8 5 32 3" fill="none" stroke="#222" stroke-width="1.500"/><use href="#sq" x="4" y="27" width="4" height="4"/><use href="#sq" x="12" y="10" width="4" height="4"/><use href="#sq" x="30" y="1" width="4" height="4"/></svg>圆弧</div>
    <div class="it dn"><svg width="38" height="35"><ellipse cx="19" cy="17.500" rx="14" ry="10" fill="#f4f6f6" stroke="#222" stroke-width="1.300"/><path d="M8 14q11-10 22 0z" fill="#d4def0"/><path d="M16 17.500h6M19 14.500v6" stroke="#222"/><use href="#sq" x="17" y="6" width="4" height="4"/><use href="#sq" x="30" y="15" width="4" height="4"/></svg>椭圆</div>
    <div class="it wide dn"><svg width="38" height="35"><path d="M6.500 8.500h26v18h-26z" fill="#f4f6f6" stroke="#222" stroke-width="1.300"/><path d="M8 12h24v5H8z" fill="#d4def0"/><use href="#sq" x="30" y="6" width="4" height="4"/><use href="#sq" x="4" y="24" width="4" height="4"/></svg>多边形</div>
   </div><div class="cp">绘图</div></div>
   <div class="pnl p2"><div class="its d-flex">
    <div class="it"><svg width="38" height="35"><circle cx="12" cy="9" r="6" fill="#f6f6f6" stroke="#222"/><path d="M20 7h8v5M25 10l3 4 3-4" fill="none" stroke="#111" stroke-width="1.500"/><circle cx="27" cy="25" r="6" fill="#cfe0f4" stroke="#1a6fd0"/><circle cx="23" cy="22" r="6" fill="#cfe0f4" stroke="#1a6fd0"/></svg>复制</div>
    <div class="it"><svg width="38" height="35"><path d="M19 3l4 5h-2v4h-4V8h-2zM19 32l4-5h-2v-4h-4v4h-2zM5 17.500l5-4v2h4v4h-4v2zM33 17.500l-5-4v2h-4v4h4v2z" fill="#111"/><path d="M16 14.500h6v6h-6z" fill="#fff" stroke="#444"/></svg>移动</div>
    <div class="it"><svg width="38" height="35"><path d="M25 9a12 12 0 1 1-12 0" fill="none" stroke="#222" stroke-width="2.600"/><path d="M14 3l10 4.500-9 5.500z" fill="#111"/></svg>旋转</div>
    <div class="it"><svg width="38" height="35"><path d="M5 28.500L15.500 8v20.500z" fill="#fff" stroke="#222"/><path d="M33 28.500L22.500 8v20.500z" fill="#bcd8f4" stroke="#1a6fd0"/><path d="M19 4v28" stroke="#111"/></svg>镜像</div>
    <div class="it"><svg width="38" height="35"><path d="M4 17.500h10" stroke="#222" stroke-width="1.500"/><path d="M15 17.500h11" stroke="#1a5fd0" stroke-dasharray="4 2"/><path d="M24 29L34 7" stroke="#1a5fd0" stroke-width="1.500"/></svg>延伸</div>
    <div class="it"><svg width="38" height="35"><path d="M4 17.500h9" stroke="#222" stroke-width="1.500"/><path d="M20 17.500h14" stroke="#1a5fd0" stroke-dasharray="4 2"/><path d="M10 29L20 7" stroke="#1a5fd0" stroke-width="1.500"/></svg>裁剪</div>
    <div class="it"><svg width="38" height="35"><path d="M34 28H10q-5 0-5-5t5-4h3V11q0-5 6-5t6 5v6h9" fill="none" stroke="#1a4f90" stroke-width="1.500"/><path d="M34 24H10M17 22V12q2-4 4 0v8h13" fill="none" stroke="#333" stroke-width="1.300"/></svg>偏移</div>
    <div class="it"><svg width="38" height="35"><path d="M17 17L31 3l3 4-13 16z" fill="#d8b060" stroke="#432"/><path d="M14 20l4-4 5 5-4 4z" fill="#ddd" stroke="#555"/><path d="M10 25l4-5 5 5-5 3q-4 0-4-3z" fill="#d83a1c" stroke="#421"/><path d="M4 30h13M24 29.500h10" stroke="#222" stroke-width="2"/></svg>删除</div>
   </div><div class="cp">修改</div></div>
   <div class="pnl p3"><div class="its d-flex">
    <div class="it"><svg width="38" height="35"><path d="M4 16L15 5v6q17-1 17 10l-1 8h-4q1-9-4-9h-8v6z" fill="#f2f6fa" stroke="#222" stroke-width="1.300"/></svg>撤消</div>
    <div class="it"><svg width="38" height="35"><path d="M34 16L23 5v6Q6 10 6 21l1 8h4q-1-9 4-9h8v6z" fill="#f2f6fa" stroke="#222" stroke-width="1.300"/></svg>恢复</div>
   </div><div class="cp">撤消恢复</div></div>
   <div class="fl d-flex"><div class="fls">
     <svg width="158" height="32"><path d="M19 3.500L7 16h6v11h12V16h6z" fill="url(#bv)" stroke="#123" stroke-width="1.500"/><path d="M57 27.500L45 16h6V3.500h12V16h6z" fill="url(#bv)" stroke="#123" stroke-width="1.500"/><path d="M81 3h30v23l-15 3-15-3z" fill="#aaa"/><g stroke="#2a2f36" stroke-width="3.200" fill="none"><path d="M81 5l15 3 15-3M81 12l15 3 15-3M81 19l15 3 15-3M81 26l15 3 15-3"/></g><g stroke="#eee" stroke-width="1.500" fill="none"><path d="M81 9l15 3 15-3M81 16l15 3 15-3M81 23l15 3 15-3"/></g><path d="M119.500 0v30" stroke="#111"/><path d="M121.500 3.500h11v10h-11z" fill="#b8ccf0" stroke="#1a4f90"/><path d="M121.500 17.500h26v11h-26z" fill="#f4f6f6" stroke="#333"/></svg>
     <div class="flsel d-flex justify-content-between"><span>第1标准层 (第1自然层)</span><svg width="8" height="20"><path d="M0 8h8l-4 5z"/></svg></div></div></div>
  </div>
  <svg class="cv" width="942" height="318" viewBox="951 92 942 318"><rect x="951" y="92" width="942" height="318" fill="#222830"/><path d="M951 92h18q4 180 8 318h-26z" fill="#1d242b"/>
   <path d="M1333.500 201v41l34-20M1333.500 242l35 20" fill="none" stroke="#ffd21c" stroke-width="1.200"/><path d="M1368 262l254 148" stroke="#1ce8ee" stroke-width="1.200"/><circle cx="1333.500" cy="242" r="2.500" fill="#f6f0c8"/>
   <g font-family="Lato" font-size="17" fill="#f0f0f0" font-weight="300" letter-spacing="0"><text x="1336" y="191">Z</text><text x="1379" y="218">Y</text><text x="1378" y="263">X</text><text x="1003" y="308" fill="#6aa8f0">Z</text><text x="1046" y="335" fill="#9be04c">Y</text><text x="1044" y="380" fill="#e8609c">X</text></g>
   <path d="M1001 359l25-15" stroke="#70dc3c" stroke-width="4.500"/><path d="M1023 336l17 0-10 13-7-2z" fill="#5ba828"/><path d="M1025 342l14-5-8 11z" fill="#78e040"/><path d="M1000 360l25 14" stroke="#e0506a" stroke-width="4"/><path d="M1022 374l8-5 9 12h-15z" fill="#e0506a"/><path d="M1000 360V322" stroke="#4a70dc" stroke-width="4.500"/><path d="M993 324q2-8 6.500-12 5 5 7 12-7 5-13.500 0z" fill="#3a78d0"/></svg>
 </section>
 <div class="strip"></div>
 <section class="gama">
  <div class="gtop d-flex">
   <svg class="glogo" width="60" height="44"><use href="#logo" x="0" y="2" width="43" height="38"/><path d="M55 5v34" stroke="#aaa" stroke-width="2" stroke-dasharray="2 2"/></svg>
   <div class="mn trk"><span>文件</span><span>编辑</span><span>帮助</span></div>
   <div class="ti">盈建科数字化智能设计软件<span class="mono"> Y-GAMA - </span>新文件<span class="mono">*</span></div>
   <div class="pin">窗口置顶</div>
   <svg class="ms-auto" width="143" height="55"><path d="M3.500 25.500h28v8h-28z" fill="#d4def0" stroke="#5a6a90" stroke-width="1.300"/><path d="M59.500 17.500h28v25h-28z" fill="#f2f5f6" stroke="#1a6fb0" stroke-width="1.300"/><path d="M60 18h27v4H60z" fill="#3f9ce4"/><path d="M61 24h25" stroke="#ccc" stroke-width="2"/><path d="M119 15l9 9 9-9 7 6-9 8 9 9-7 7-9-9-9 9-7-7 9-9-9-8z" fill="#cc1418" stroke="#700"/><path d="M119 16l9 9 9-9 6 5-8 7h-14l-8-7z" fill="#e0606c"/></svg>
  </div>
  <div class="gbody d-flex">
   <nav class="side">
    <div class="it i1"><svg width="26" height="8"><path d="M1 3h20l4 5H1z" fill="#fbc94c" stroke="#d89420"/></svg><div>通用几何</div></div>
    <div class="it"><svg width="26" height="21"><path d="M1.500 7.500h3v11h-3zM7.500 7.500h3v11h-3zM12.500 7.500h2v11h-2zM16.500 7.500h3v11h-3zM22 7.500h3v11h-3z" fill="#eee" stroke="#aaa"/><path d="M9 2h8v3l-4 3-4-3z" fill="#3f9ce4"/></svg><div>数据结构</div></div>
    <div class="it i3"><svg width="26" height="25"><path d="M1 6h21l-2 9H5zM22 6l2-4M20 15v4H7" fill="#e4e4e0" stroke="#888"/><circle cx="24" cy="2" r="2" fill="#e09422"/><circle cx="8" cy="21" r="3" fill="#777"/><circle cx="19" cy="21" r="3" fill="#777"/></svg><div>数据容器</div></div>
    <div class="it i4"><svg width="26" height="25"><path d="M3.500.500h17v19h-17z" fill="#dfe8f8" stroke="#6a88c0"/><path d="M6 4h12M6 8h12M6 12h12M8 2v15M12 2v15M16 2v15" stroke="#a8bce0"/><path d="M1 23q3-6 6-1z" fill="#3aa81c"/><path d="M8 21h16" stroke="#888" stroke-width="4" stroke-dasharray="5 1"/></svg><div>数据交互</div></div>
    <div class="it sel pt-2"><svg width="26" height="29"><path d="M5 9h15M13 9v12h7" stroke="#999" stroke-width="2" fill="none"/><g fill="#eee" stroke="#999"><circle cx="5" cy="10" r="4"/><circle cx="20" cy="10" r="4"/><circle cx="20" cy="21" r="4"/></g></svg><div>GH接口</div></div>
    <div class="it i6"><svg width="26" height="24"><path d="M1.500 1.500h21v15h-21z" fill="#dfe8f8" stroke="#8898b8"/><text x="4" y="14" font-size="14" font-weight="700" font-family="Liberation Serif" fill="#234a90">T</text><text x="12" y="14" font-size="10" font-weight="700" font-family="Liberation Serif" fill="#234a90">T</text><path d="M8 23l2-5L21 8l3 3-11 10z" fill="#f0b040" stroke="#964"/></svg><div>文字</div></div>
    <div class="it pt-1"><svg width="26" height="21"><path d="M1.500 1.500h18l5 4v15h-23z" fill="#f6f8f8" stroke="#bbb"/><path d="M4 6h7v6H4zM14 5h8v6h-8zM9 12h9v6H9z" fill="#5fb4e0" stroke="#1a6fb0"/><path d="M4 8h7M14 7h8M9 15h9" stroke="#fff"/></svg><div>PGX卡片</div></div>
   </nav>
   <div class="pane">
    <div class="nd n1"><div class="l"><span>X</span><span>Y</span><span>Z</span></div><div class="h">点（XYZ）</div><div class="r">点</div></div>
    <div class="nd n2"><div class="l"><span>X</span><span>Y</span><span>Z</span></div><div class="h">点（XYZ）</div><div class="r">点</div></div>
    <div class="nd n3"><div class="l"><span>起点</span><span>终点</span></div><div class="h">直线（两点）</div><div class="r">直线</div></div>
    <div class="nd n4"><div class="l"><span>直线</span></div><div class="h">发送直线</div></div>
    <svg class="wires" width="784" height="449" viewBox="1109 480 784 449" fill="none">
     <path d="M1404 759c22-2 48-29 65-29M1554 617c18 2 28 26 43 27M1556 765c30 0 15-55 42-58" stroke="#777"/><path d="M1717 676l43 10" stroke="#8fb8a4" stroke-width="2"/>
     <path d="M1124.500 746.500h201l14-14h41l13 14h8v24.500h-277z" fill="#b3c4ea" stroke="#445" stroke-dasharray="4 1.500"/>
     <path d="M1242 758.500h137M1242.500 753v12M1276.500 753v12M1310.500 753v12M1344.500 753v12M1378.500 753v12M1256.500 756v5M1297.500 756v5M1324.500 756v5M1338.500 756v5M1351.500 756v5M1365.500 756v5" stroke="#9aa2ae"/><path d="M1269 755h23v7h-23z" fill="#f6f6f4" stroke="#aaa"/>
     <text x="1133" y="764" font-size="18" font-weight="700" fill="#000" letter-spacing="0">数字滑动条</text><text x="1342" y="748" font-size="14" font-family="Open Sans" font-weight="300" fill="#222" letter-spacing="-.2">2792</text>
     <path d="M1273 763l-5 18 11 4 7-5zM1273 763l6 22M1268 781l9-10 9 9" stroke="#222" stroke-width="1.800" fill="#eee"/>
     <g stroke="#a6a8aa" stroke-width="1.300" fill="#eff3f2"><path d="M1469 576q3 1 3 5t-3 5M1469 611q3 1 3 5t-3 5M1469 647q3 1 3 5t-3 5M1470 724q3 1 3 5t-3 5M1470 759q3 1 3 5t-3 5M1470 795q3 1 3 5t-3 5M1598 640q3 1 3 5t-3 5M1598 702q3 1 3 5t-3 5M1760 681q3 1 3 5t-3 5M1550 612q4 1 4 5t-4 5M1551 760q4 1 4 5t-4 5M1714 671q4 1 4 5t-4 5M1400 753q4 1 4 5t-4 5"/></g>
    </svg>
   </div>
  </div>
 </section>
</div>
</div>
<script src="https://cdn.jsdelivr.net/npm/bootstrap@5.3.0/dist/js/bootstrap.bundle.min.js"></script>
</body>
</html>
